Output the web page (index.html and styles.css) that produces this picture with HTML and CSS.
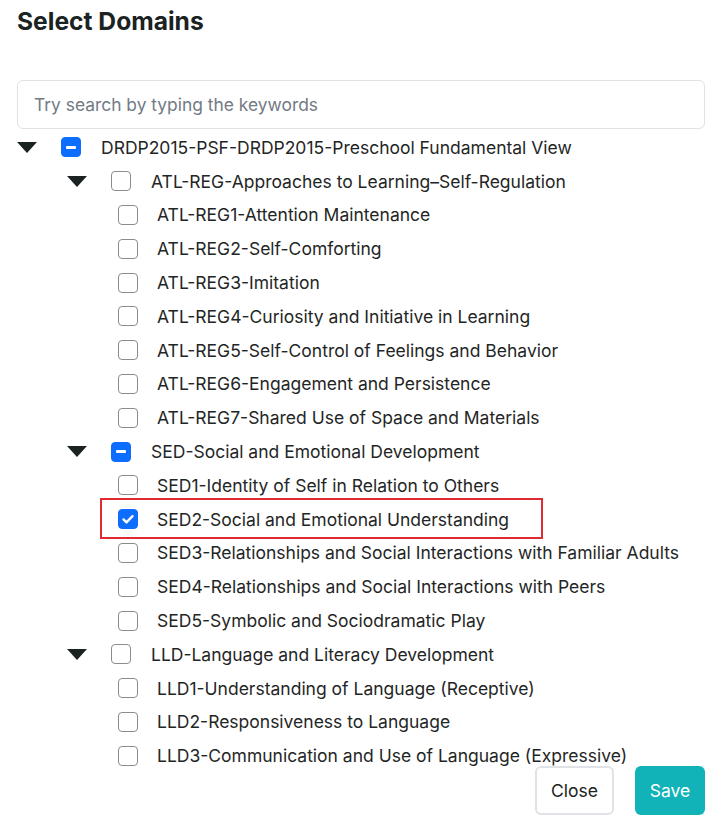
FILE: index.html
```html
<!DOCTYPE html>
<html>
<head>
<meta charset="utf-8">
<link rel="stylesheet" href="styles.css">
</head>
<body>
<div class="modal">
  <h2 class="title">Select Domains</h2>
  <div class="search">Try search by typing the keywords</div>
  <div class="tree">
    <div class="row lvl0"><span class="caret"></span><span class="cb ind"></span><span class="label">DRDP2015-PSF-DRDP2015-Preschool Fundamental View</span></div>
    <div class="row lvl1"><span class="caret"></span><span class="cb"></span><span class="label">ATL-REG-Approaches to Learning–Self-Regulation</span></div>
    <div class="row leaf"><span class="cb"></span><span class="label">ATL-REG1-Attention Maintenance</span></div>
    <div class="row leaf"><span class="cb"></span><span class="label">ATL-REG2-Self-Comforting</span></div>
    <div class="row leaf"><span class="cb"></span><span class="label">ATL-REG3-Imitation</span></div>
    <div class="row leaf"><span class="cb"></span><span class="label">ATL-REG4-Curiosity and Initiative in Learning</span></div>
    <div class="row leaf"><span class="cb"></span><span class="label">ATL-REG5-Self-Control of Feelings and Behavior</span></div>
    <div class="row leaf"><span class="cb"></span><span class="label">ATL-REG6-Engagement and Persistence</span></div>
    <div class="row leaf"><span class="cb"></span><span class="label">ATL-REG7-Shared Use of Space and Materials</span></div>
    <div class="row lvl1"><span class="caret"></span><span class="cb ind"></span><span class="label">SED-Social and Emotional Development</span></div>
    <div class="row leaf"><span class="cb"></span><span class="label">SED1-Identity of Self in Relation to Others</span></div>
    <div class="row leaf highlight"><span class="cb checked"><svg viewBox="0 0 20 20" width="20" height="20"><path d="M5 10.5l3.3 3.3L15 6.8" fill="none" stroke="#fff" stroke-width="2.6" stroke-linecap="round" stroke-linejoin="round"/></svg></span><span class="label">SED2-Social and Emotional Understanding</span></div>
    <div class="row leaf"><span class="cb"></span><span class="label">SED3-Relationships and Social Interactions with Familiar Adults</span></div>
    <div class="row leaf"><span class="cb"></span><span class="label">SED4-Relationships and Social Interactions with Peers</span></div>
    <div class="row leaf"><span class="cb"></span><span class="label">SED5-Symbolic and Sociodramatic Play</span></div>
    <div class="row lvl1"><span class="caret"></span><span class="cb"></span><span class="label">LLD-Language and Literacy Development</span></div>
    <div class="row leaf"><span class="cb"></span><span class="label">LLD1-Understanding of Language (Receptive)</span></div>
    <div class="row leaf"><span class="cb"></span><span class="label">LLD2-Responsiveness to Language</span></div>
    <div class="row leaf"><span class="cb"></span><span class="label">LLD3-Communication and Use of Language (Expressive)</span></div>
  </div>
  <div class="footer">
    <button class="btn btn-close">Close</button>
    <button class="btn btn-save">Save</button>
  </div>
</div>
</body>
</html>
```
FILE: styles.css
```css
html, body {
  margin: 0;
  padding: 0;
  background: #fff;
}
body {
  font-family: Inter, "Noto Sans", sans-serif;
  color: #1f2626;
  width: 728px;
  height: 822px;
  overflow: hidden;
}
.modal {
  padding: 0 23px 0 17px;
}
.title {
  margin: 0;
  padding-top: 6px;
  font-size: 24.6px;
  font-weight: 700;
  line-height: 30px;
  color: #1b2222;
}
.search {
  margin-top: 44px;
  height: 47px;
  border: 1px solid #dfe2e6;
  border-radius: 6px;
  box-sizing: content-box;
  display: flex;
  align-items: center;
  padding-left: 16px;
  font-size: 17.4px;
  color: #737a84;
}
.tree {
  display: flex;
  flex-direction: column;
  margin-top: 1.5px;
}
.row {
  height: 33.8px;
  display: flex;
  align-items: center;
  font-size: 17.5px;
  line-height: 20px;
  position: relative;
}
.label {
  position: relative;
  top: 0.5px;
}
.caret {
  width: 0;
  height: 0;
  border-left: 10px solid transparent;
  border-right: 10px solid transparent;
  border-top: 11px solid #1b2222;
  margin-right: 24px;
}
.cb {
  width: 20px;
  height: 20px;
  box-sizing: border-box;
  border: 1px solid #8c8c8c;
  border-radius: 4px;
  margin-right: 20px;
  flex-shrink: 0;
  position: relative;
  display: flex;
  align-items: center;
  justify-content: center;
}
.cb.ind {
  background: #0d6efd;
  border-color: #0d6efd;
}
.cb.ind::after {
  content: "";
  width: 10px;
  height: 3px;
  background: #fff;
  border-radius: 1px;
}
.cb.checked {
  background: #0d6efd;
  border-color: #0d6efd;
}
.cb.checked svg {
  display: block;
}
.lvl1 {
  padding-left: 50px;
}
.leaf {
  padding-left: 101px;
}
.leaf .cb {
  margin-right: 19px;
}
.highlight::after {
  content: "";
  position: absolute;
  left: 83px;
  top: -4px;
  width: 443px;
  height: 41px;
  box-sizing: border-box;
  border: 2px solid #e12a2f;
}
.footer {
  display: flex;
  justify-content: flex-end;
  gap: 21px;
  margin-top: -6.5px;
}
.btn {
  height: 49px;
  border-radius: 6px;
  font-family: Inter, "Noto Sans", sans-serif;
  font-size: 17.5px;
  padding: 0;
  cursor: pointer;
}
.btn-close {
  width: 79px;
  background: #fff;
  border: 2px solid #dfe2e6;
  color: #1b2222;
}
.btn-save {
  width: 70px;
  background: #12b3b8;
  border: none;
  color: #fff;
}
```
